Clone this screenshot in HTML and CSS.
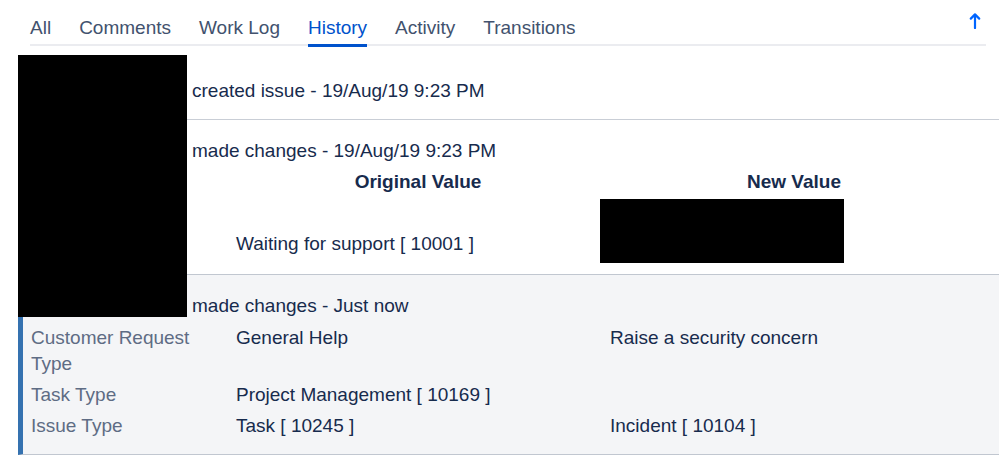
FILE: index.html
```html
<!DOCTYPE html>
<html lang="en">
<head>
<meta charset="utf-8">
<title>Issue history</title>
<link rel="stylesheet" href="styles.css">
</head>
<body>
<div class="tabs">
  <a class="tab">All</a>
  <a class="tab">Comments</a>
  <a class="tab">Work Log</a>
  <a class="tab active">History</a>
  <a class="tab">Activity</a>
  <a class="tab">Transitions</a>
  <span class="sort" aria-label="Sort">
    <svg width="12" height="17" viewBox="0 0 12 17"><path d="M6 16V2.5M1.8 6.6L6 2.4l4.2 4.2" fill="none" stroke="#0065ff" stroke-width="2.2" stroke-linecap="round" stroke-linejoin="round"/></svg>
  </span>
</div>

<div class="history">
  <div class="entry">
    <div class="action">created issue - 19/Aug/19 9:23 PM</div>
  </div>

  <div class="entry entry-changes">
    <div class="action">made changes - 19/Aug/19 9:23 PM</div>
    <div class="row head">
      <div class="cell label"></div>
      <div class="cell val th">Original Value</div>
      <div class="cell val th">New Value</div>
    </div>
    <div class="row status">
      <div class="cell label">Status</div>
      <div class="cell val">Waiting for support [ 10001 ]</div>
      <div class="cell redacted-cell"><div class="redacted-block"></div></div>
    </div>
  </div>

  <div class="entry entry-new">
    <div class="action">made changes - Just now</div>
    <div class="row">
      <div class="cell label">Customer Request Type</div>
      <div class="cell val">General Help</div>
      <div class="cell val">Raise a security concern</div>
    </div>
    <div class="row">
      <div class="cell label">Task Type</div>
      <div class="cell val">Project Management [ 10169 ]</div>
      <div class="cell val"></div>
    </div>
    <div class="row">
      <div class="cell label">Issue Type</div>
      <div class="cell val">Task [ 10245 ]</div>
      <div class="cell val">Incident [ 10104 ]</div>
    </div>
  </div>

  <div class="redacted-avatar"></div>
</div>
</body>
</html>
```

FILE: styles.css
```css
* { box-sizing: border-box; }

body {
  margin: 0;
  background: #ffffff;
  font-family: "Liberation Sans", Arial, sans-serif;
  font-size: 19px;
  color: #172b4d;
  width: 999px;
  overflow: hidden;
}

.tabs {
  display: flex;
  gap: 28px;
  margin: 0 13px 0 30px;
  border-bottom: 2px solid #ebecf0;
  height: 46px;
}

.tab {
  display: block;
  padding: 16px 0 4px;
  line-height: 24px;
  color: #42526e;
  border-bottom: 3px solid transparent;
  height: 47px;
  cursor: pointer;
}

.tab.active {
  color: #0052cc;
  border-bottom-color: #0052cc;
}

.sort {
  margin-left: auto;
  margin-right: 5px;
  padding-top: 12px;
  line-height: 0;
}

.history {
  position: relative;
  margin-left: 18px;
}

.entry {
  border-left: 5px solid transparent;
  padding-left: 8px;
}

.entry:first-child {
  padding-top: 32px;
  padding-bottom: 15px;
  border-bottom: 1px solid #c9ced6;
}

.action {
  margin-left: 161px;
  line-height: 26px;
}

.entry-changes {
  padding-top: 18px;
  padding-bottom: 11px;
}

.entry-new {
  background: #f4f5f7;
  border-top: 1px solid #c1c7d0;
  border-bottom: 1px solid #c1c7d0;
  border-left-color: #3572b0;
  padding-top: 18px;
  padding-bottom: 13px;
}

.entry-new .action {
  margin-bottom: 3px;
}

.entry-new .row .cell {
  padding-bottom: 2px;
}

.row {
  display: grid;
  grid-template-columns: 195px 374px 388px;
  line-height: 26px;
}

.cell {
  padding: 3px 10px 3px 0;
}

.cell.val {
  padding-left: 10px;
}

.label {
  color: #5e6c84;
}

.row.head .cell {
  padding-top: 5px;
}

.th {
  font-weight: bold;
  text-align: center;
}

.row.head .th:nth-child(2) {
  padding-right: 0;
}

.row.status {
  align-items: end;
}

.row.status .cell {
  padding-bottom: 6px;
}

.row.status .redacted-cell {
  padding: 1px 0 0;
}

.redacted-block {
  width: 244px;
  height: 64px;
  background: #000000;
}

.redacted-avatar {
  position: absolute;
  left: 0;
  top: 9px;
  width: 169px;
  height: 262px;
  background: #000000;
}
```
